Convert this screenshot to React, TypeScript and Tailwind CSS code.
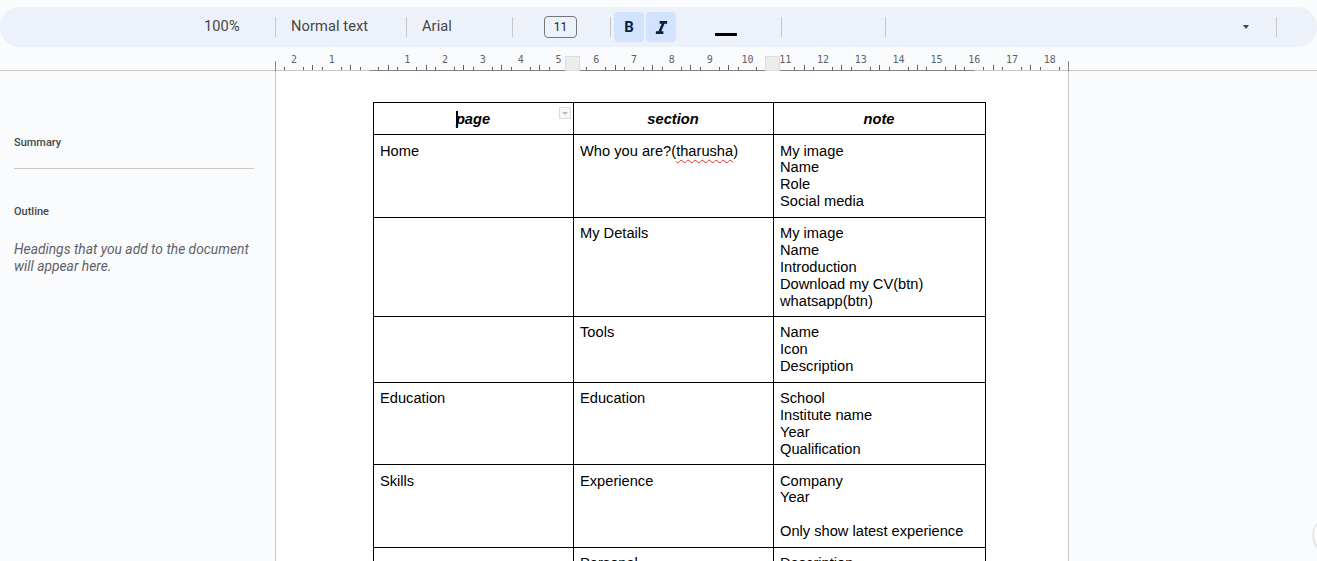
import { Fragment } from 'react';

const CM = 37.795;
const ZERO = 94.5;

const rows = [
  { page: 'Home', section: 'Who you are?', spell: 'tharusha', notes: ['My image', 'Name', 'Role', 'Social media'] },
  { page: '', section: 'My Details', notes: ['My image', 'Name', 'Introduction', 'Download my CV(btn)', 'whatsapp(btn)'] },
  { page: '', section: 'Tools', notes: ['Name', 'Icon', 'Description'] },
  { page: 'Education', section: 'Education', notes: ['School', 'Institute name', 'Year', 'Qualification'] },
  { page: 'Skills', section: 'Experience', notes: ['Company', 'Year', '\u00a0', 'Only show latest experience'] },
  { page: '', section: 'Personal', notes: ['Description', '\u00a0', '\u00a0'] },
];

const Sep = () => <div className="w-px h-5 bg-[#c7c7c7] shrink-0" />;

const Ruler = () => {
  const ticks = [];
  for (let k = -10; k <= 74; k++) {
    const x = ZERO + (k * CM) / 4;
    if (x < 1 || x > 792) continue;
    if (k % 4 === 0) {
      if (k === 0) continue;
      ticks.push(
        <text key={k} x={x} y={16} textAnchor="middle" fontSize="10" fill="#5f6368" fontFamily="'DejaVu Sans Mono', monospace">
          {Math.abs(k / 4)}
        </text>
      );
    } else {
      const h = k % 4 === 2 || k % 4 === -2 ? 5 : 3;
      ticks.push(<line key={k} x1={x} x2={x} y1={23 - h} y2={23} stroke="#5f6368" strokeWidth="1" shapeRendering="crispEdges" />);
    }
  }
  return (
    <svg width="794" height="24" className="block shrink-0">
      <line x1="0" x2="794" y1="23.5" y2="23.5" stroke="#c7c7c7" />
      <line x1={ZERO} x2={ZERO + 16 * CM} y1="23.5" y2="23.5" stroke="#80868b" />
      <line x1="0.5" x2="0.5" y1="14" y2="24" stroke="#80868b" />
      <line x1="793.5" x2="793.5" y1="14" y2="24" stroke="#80868b" />
      {ticks}
      <rect x="290.5" y="9.5" width="14" height="14" fill="#ececec" stroke="#dadce0" />
      <rect x="490.5" y="9.5" width="14" height="14" fill="#ececec" stroke="#dadce0" />
    </svg>
  );
};

const Cell = ({ children, className = '' }: { children: React.ReactNode; className?: string }) => (
  <div className={`bg-white pl-[6px] pr-[7px] pt-[7.5px] pb-[6.5px] leading-[16.87px] text-black ${className}`}>{children}</div>
);

export default function App() {
  return (
    <div className="relative h-[561px] w-full overflow-hidden bg-[#f9fbfd] flex flex-col font-['Roboto',sans-serif]">
      {/* Toolbar */}
      <div className="pt-[7px] shrink-0">
        <div className="h-10 rounded-full bg-[#edf2fa] flex items-center text-[14.6px] text-[#444746] tracking-[0.1px]">
          <div className="w-[275px] pl-[204px]">100%</div>
          <Sep />
          <div className="w-[130px] pl-[15px]">Normal text</div>
          <Sep />
          <div className="w-[105px] pl-[15px]">Arial</div>
          <Sep />
          <div className="w-[97px] pl-[31px]">
            <div className="w-[33px] h-[22px] border border-[#747775] rounded-[4px] flex items-center justify-center text-[12px] text-[#1f1f1f]">11</div>
          </div>
          <Sep />
          <div className="ml-[3px] flex gap-[2px]">
            <div className="w-[30px] h-[30px] rounded-[4px] bg-[#d3e3fd] flex items-center justify-center font-bold text-[15px] text-[#0b1f3f]">B</div>
            <div className="w-[30px] h-[30px] rounded-[4px] bg-[#d3e3fd] flex items-center justify-center">
              <svg width="15" height="15" viewBox="4 3 16 16" fill="#0b1f3f">
                <path d="M10 4v3h2.21l-3.42 8H6v3h8v-3h-2.21l3.42-8H18V4z" />
              </svg>
            </div>
          </div>
          <div className="ml-[39px] w-[22px] h-[3px] bg-black mt-[14px]" />
          <div className="ml-[44px]"><Sep /></div>
          <div className="ml-[103px]"><Sep /></div>
          <div className="ml-[357px] w-0 h-0 border-x-[3.5px] border-x-transparent border-t-[4px] border-t-[#444746]" />
          <div className="ml-[27px]"><Sep /></div>
        </div>
      </div>

      {/* Ruler */}
      <div className="flex h-6 shrink-0">
        <div className="w-[275px] shrink-0 border-b border-[#c7c7c7]" />
        <Ruler />
        <div className="flex-1 border-b border-[#c7c7c7]" />
      </div>

      <div className="flex flex-1 min-h-0">
        {/* Sidebar */}
        <div className="w-[275px] shrink-0 pl-[14px] pt-[65px]">
          <div className="text-[11px] font-medium text-[#444746] leading-[14px]">Summary</div>
          <div className="w-[240px] h-px bg-[#c7c7c7] mt-[18px]" />
          <div className="text-[11px] font-medium text-[#444746] leading-[14px] mt-[36px]">Outline</div>
          <div className="text-[13.8px] italic text-[#5f6368] leading-[17px] mt-[22px] w-[245px]">
            Headings that you add to the document will appear here.
          </div>
        </div>

        {/* Page */}
        <div className="w-[794px] shrink-0 bg-white border-x border-[#c7c7c7] pt-[31px] pl-[97px]">
          <div className="grid grid-cols-[199px_199px_211px] gap-px bg-black p-px w-[613px] font-['Liberation_Sans',Arial,sans-serif] text-[14.67px]">
            <Cell className="relative text-center font-bold italic">
              <span className="inline-block w-[2px] h-[17px] bg-black align-top -mr-[2px]" />page
              <div className="absolute right-[2px] top-[4px] w-[12px] h-[12px] border border-[#dadce0] bg-[#f8f8f8] flex items-center justify-center">
                <div className="w-0 h-0 border-x-[3px] border-x-transparent border-t-[3px] border-t-[#bdbdbd]" />
              </div>
            </Cell>
            <Cell className="text-center font-bold italic">section</Cell>
            <Cell className="text-center font-bold italic">note</Cell>
            {rows.map((r, i) => (
              <Fragment key={i}>
                <Cell>{r.page || '\u00a0'}</Cell>
                <Cell>
                  {r.section}
                  {r.spell && (
                    <>
                      (<span className="underline decoration-wavy decoration-[#d93025] decoration-1 underline-offset-[3px]">{r.spell}</span>)
                    </>
                  )}
                </Cell>
                <Cell>
                  {r.notes.map((n, j) => (
                    <div key={j}>{n}</div>
                  ))}
                </Cell>
              </Fragment>
            ))}
          </div>
        </div>
        <div className="flex-1" />
      </div>

      {/* floating button edge */}
      <div className="absolute right-[-34px] top-[516px] w-[38px] h-[38px] rounded-full bg-white border border-[#dadce0] shadow" />
    </div>
  );
}
